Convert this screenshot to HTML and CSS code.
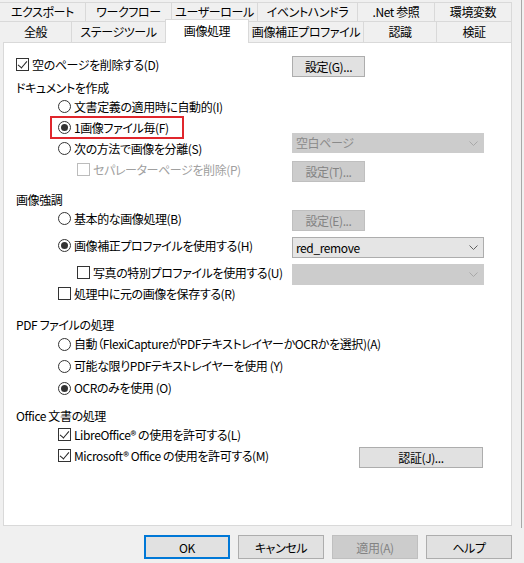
FILE: index.html
```html
<!DOCTYPE html>
<html lang="ja">
<head>
    <meta charset="UTF-8">
    <title>画像処理</title>
    <link rel="stylesheet" href="styles.css">
</head>
<body>
    <div class="frame">
        <div class="tabs-top">
            <div class="tab">エクスポート</div>
            <div class="tab">ワークフロー</div>
            <div class="tab">ユーザーロール</div>
            <div class="tab">イベントハンドラ</div>
            <div class="tab">.Net 参照</div>
            <div class="tab">環境変数</div>
        </div>
        <div class="tabs-bottom">
            <div class="tab">全般</div>
            <div class="tab">ステージツール</div>
            <div class="tab active">画像処理</div>
            <div class="tab">画像補正プロファイル</div>
            <div class="tab">認識</div>
            <div class="tab">検証</div>
        </div>

        <div class="panel">
            <div class="row">
                <label class="opt"><span class="chk on"></span>空のページを削除する(D)</label>
                <div class="side"><button class="btn">設定(G)...</button></div>
            </div>

            <div class="group g-doc">
                <div class="head">ドキュメントを作成</div>
                <div class="row indent">
                    <label class="opt"><span class="rad"></span>文書定義の適用時に自動的(I)</label>
                </div>
                <div class="row indent">
                    <label class="opt mark"><span class="rad on"></span>1画像ファイル毎(F)</label>
                </div>
                <div class="row indent">
                    <label class="opt"><span class="rad"></span>次の方法で画像を分離(S)</label>
                    <div class="side">
                        <div class="combo off lift">空白ページ
                            <svg width="9" height="5" viewBox="0 0 9 5"><path d="M0.5 0.5 L4.5 4.5 L8.5 0.5" fill="none" stroke="#a8a8a8"/></svg>
                        </div>
                    </div>
                </div>
                <div class="row indent2">
                    <label class="opt dim"><span class="chk off"></span>セパレーターページを削除(P)</label>
                    <div class="side"><button class="btn" disabled>設定(T)...</button></div>
                </div>
            </div>

            <div class="group g-enh">
                <div class="head">画像強調</div>
                <div class="row indent">
                    <label class="opt"><span class="rad"></span>基本的な画像処理(B)</label>
                    <div class="side"><button class="btn" disabled>設定(E)...</button></div>
                </div>
                <div class="row indent spaced">
                    <label class="opt"><span class="rad on"></span>画像補正プロファイルを使用する(H)</label>
                    <div class="side">
                        <div class="combo">red_remove
                            <svg width="9" height="5" viewBox="0 0 9 5"><path d="M0.5 0.5 L4.5 4.5 L8.5 0.5" fill="none" stroke="#606060"/></svg>
                        </div>
                    </div>
                </div>
                <div class="row indent2 spaced">
                    <label class="opt"><span class="chk"></span>写真の特別プロファイルを使用する(U)</label>
                    <div class="side">
                        <div class="combo off">
                            <svg width="9" height="5" viewBox="0 0 9 5"><path d="M0.5 0.5 L4.5 4.5 L8.5 0.5" fill="none" stroke="#a8a8a8"/></svg>
                        </div>
                    </div>
                </div>
                <div class="row indent">
                    <label class="opt"><span class="chk"></span>処理中に元の画像を保存する(R)</label>
                </div>
            </div>

            <div class="group g-pdf">
                <div class="head">PDF ファイルの処理</div>
                <div class="row indent">
                    <label class="opt"><span class="rad"></span>自動（FlexiCaptureがPDFテキストレイヤーかOCRかを選択)(A)</label>
                </div>
                <div class="row indent">
                    <label class="opt"><span class="rad"></span>可能な限りPDFテキストレイヤーを使用 (Y)</label>
                </div>
                <div class="row indent">
                    <label class="opt"><span class="rad on"></span>OCRのみを使用 (O)</label>
                </div>
            </div>

            <div class="group g-office">
                <div class="head">Office 文書の処理</div>
                <div class="row indent">
                    <label class="opt"><span class="chk on"></span>LibreOffice® の使用を許可する(L)</label>
                </div>
                <div class="row indent">
                    <label class="opt"><span class="chk on"></span>Microsoft® Office の使用を許可する(M)</label>
                    <div class="side"><button class="btn auth">認証(J)...</button></div>
                </div>
            </div>
        </div>
    </div>

    <div class="footer">
        <button class="btn default">OK</button>
        <button class="btn">キャンセル</button>
        <button class="btn" disabled>適用(A)</button>
        <button class="btn">ヘルプ</button>
    </div>
</body>
</html>
```

FILE: styles.css
```css
* {
    box-sizing: border-box;
}
body {
    margin: 0;
    background-color: #f0f0f0;
    font-family: "Noto Sans CJK JP", "Noto Sans", sans-serif;
    font-size: 12px;
    font-feature-settings: "palt";
    letter-spacing: -0.4px;
    color: #000;
}
.frame {
    width: 522px;
    padding: 2px 0 2px 0;
    border-right: 1px solid #a8a8a8;
}

/* tabs */
.tabs-top,
.tabs-bottom {
    display: grid;
    width: 512px;
}
.tabs-top {
    grid-template-columns: 86px 86px 86px 100px 77px 77px;
    height: 19px;
}
.tabs-bottom {
    grid-template-columns: 72px 94px 83px 115px 73px 75px;
    height: 21px;
}
.tab {
    display: flex;
    align-items: center;
    justify-content: center;
    border-top: 1px solid #d9d9d9;
    border-right: 1px solid #d9d9d9;
    line-height: 16px;
    white-space: nowrap;
}
.tab.active {
    background-color: #fff;
    border-left: 1px solid #d9d9d9;
    margin: -2px 0 -1px -1px;
    padding-bottom: 2px;
    position: relative;
    z-index: 1;
}

/* page */
.panel {
    width: 509px;
    height: 484px;
    margin-left: 3px;
    padding: 11px 27px 0 12px;
    background-color: #fff;
    border: 1px solid #d9d9d9;
}
.row {
    display: flex;
    align-items: center;
    height: 21px;
}
.head {
    display: flex;
    align-items: center;
    height: 16px;
    line-height: 16px;
}
.indent {
    padding-left: 42px;
}
.indent2 {
    padding-left: 61px;
}
.spaced {
    margin-top: 6px;
}
.g-doc {
    margin-top: 5px;
}
.g-enh {
    margin-top: 12px;
}
.g-pdf {
    margin-top: 13px;
}
.g-pdf .row {
    height: 22px;
}
.g-office {
    margin-top: 9px;
}

.opt {
    flex: 1;
    display: flex;
    align-items: center;
    gap: 3px;
    line-height: 16px;
    white-space: nowrap;
}
.opt.dim {
    color: #a0a0a0;
}
.opt.mark {
    flex: none;
    width: 134px;
    height: 23px;
    margin-left: -8px;
    padding-left: 6px;
    border: 2px solid #e0262c;
}

/* check boxes and radio buttons */
.chk,
.rad {
    flex: none;
    display: flex;
    align-items: center;
    justify-content: center;
    width: 13px;
    height: 13px;
    border: 1px solid #333;
    background-color: #fff;
}
.rad {
    border-radius: 50%;
}
.chk.off {
    border-color: #bcbcbc;
}
.chk.on::after {
    content: "";
    width: 4px;
    height: 8px;
    margin-top: -2px;
    border-right: 1.3px solid #222;
    border-bottom: 1.3px solid #222;
    transform: rotate(40deg);
}
.rad.on::after {
    content: "";
    width: 7px;
    height: 7px;
    border-radius: 50%;
    background-color: #333;
}

/* right column controls */
.side {
    flex: none;
    width: 192px;
    align-self: stretch;
}
.side .btn,
.side .combo {
    margin-top: 2px;
}
.side .combo.lift {
    margin-top: -5px;
    height: 20px;
}
.btn {
    height: 21px;
    width: 73px;
    padding: 0;
    font: inherit;
    letter-spacing: inherit;
    color: #000;
    background-color: #e1e1e1;
    border: 1px solid #adadad;
}
.btn:disabled {
    background-color: #cccccc;
    border-color: #bfbfbf;
    color: #838383;
}
.btn.auth {
    width: 124px;
    margin-left: 67px;
}
.combo {
    display: flex;
    align-items: center;
    justify-content: space-between;
    height: 21px;
    padding: 0 5px 0 3px;
    background-color: #e5e5e5;
    border: 1px solid #adadad;
    line-height: 16px;
}
.combo.off {
    justify-content: flex-end;
    background-color: #cccccc;
    border-color: #cccccc;
    color: #8a8a8a;
}
.combo.off.lift {
    justify-content: space-between;
}

/* dialog buttons */
.footer {
    display: flex;
    justify-content: flex-end;
    gap: 8px;
    width: 512px;
    padding-top: 7px;
}
.footer .btn {
    width: 86px;
    height: 24px;
}
.footer .btn.default {
    border: 2px solid #0078d7;
}
```
